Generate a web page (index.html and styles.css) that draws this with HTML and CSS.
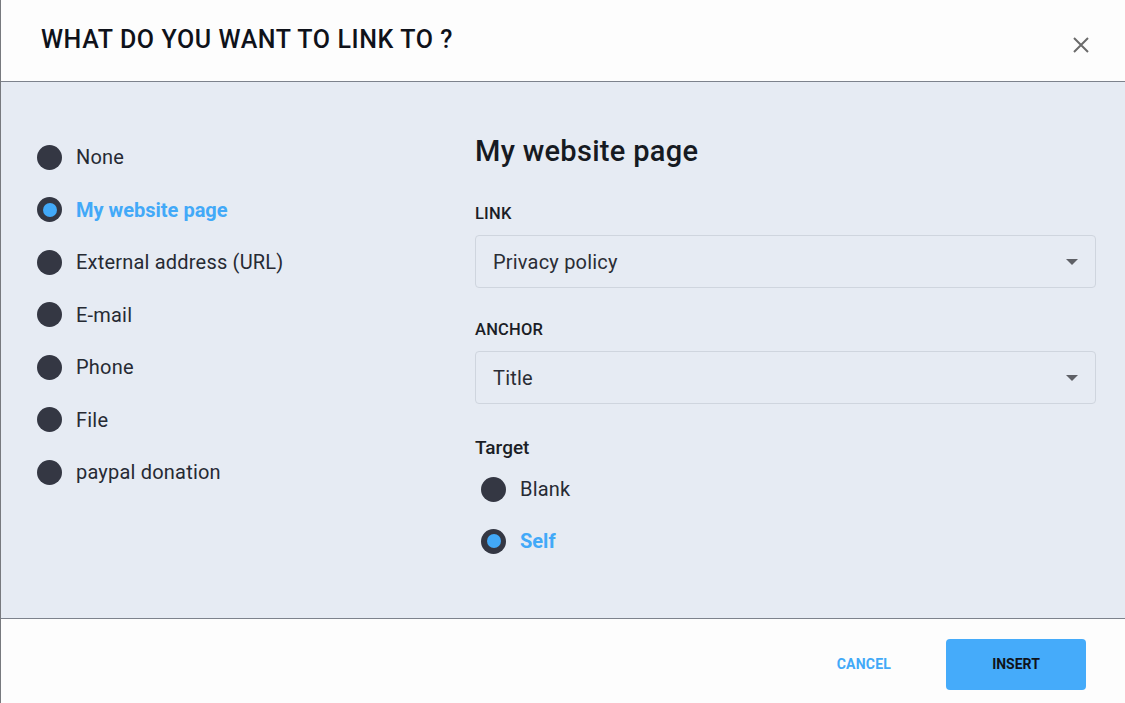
FILE: index.html
```html
<!DOCTYPE html>
<html lang="en">
<head>
<meta charset="utf-8">
<title>Link dialog</title>
<link rel="stylesheet" href="styles.css">
</head>
<body>
<div class="dialog">
  <header class="dlg-head">
    <h1 class="dlg-title">WHAT DO YOU WANT TO LINK TO ?</h1>
    <button class="close" aria-label="Close">
      <svg width="18" height="18" viewBox="0 0 18 18"><path d="M2 2L16 16M16 2L2 16" stroke="#6b6b6b" stroke-width="2" fill="none"/></svg>
    </button>
  </header>
  <main class="dlg-body">
    <ul class="types">
      <li class="radio"><span class="dot"></span><span class="lbl">None</span></li>
      <li class="radio on"><span class="dot"></span><span class="lbl">My website page</span></li>
      <li class="radio"><span class="dot"></span><span class="lbl">External address (URL)</span></li>
      <li class="radio"><span class="dot"></span><span class="lbl">E-mail</span></li>
      <li class="radio"><span class="dot"></span><span class="lbl">Phone</span></li>
      <li class="radio"><span class="dot"></span><span class="lbl">File</span></li>
      <li class="radio"><span class="dot"></span><span class="lbl">paypal donation</span></li>
    </ul>
    <section class="detail">
      <h2 class="detail-title">My website page</h2>
      <div class="field">
        <div class="flabel">LINK</div>
        <div class="select"><span>Privacy policy</span><span class="caret"></span></div>
      </div>
      <div class="field">
        <div class="flabel">ANCHOR</div>
        <div class="select"><span>Title</span><span class="caret"></span></div>
      </div>
      <div class="target-label">Target</div>
      <ul class="targets">
        <li class="radio"><span class="dot"></span><span class="lbl">Blank</span></li>
        <li class="radio on"><span class="dot"></span><span class="lbl">Self</span></li>
      </ul>
    </section>
  </main>
  <footer class="dlg-foot">
    <button class="btn-cancel">CANCEL</button>
    <button class="btn-insert">INSERT</button>
  </footer>
</div>
</body>
</html>
```
FILE: styles.css
```css
* { box-sizing: border-box; }
html, body { margin: 0; padding: 0; }
body {
  font-family: Roboto, "Liberation Sans", sans-serif;
  background: #fdfdfd;
  color: #1b1e26;
  width: 1125px;
  height: 703px;
  overflow: hidden;
}
.dialog {
  height: 703px;
  display: flex;
  flex-direction: column;
  border-left: 1px solid #77797e;
  background: #fdfdfd;
}
.dlg-head {
  height: 82px;
  flex: none;
  display: flex;
  align-items: flex-start;
  justify-content: space-between;
  border-bottom: 1px solid #7d828c;
  padding: 0 35px 0 40px;
}
.dlg-title {
  margin: 24px 0 0;
  font-size: 25px;
  line-height: 32px;
  font-weight: 500;
  letter-spacing: 0.6px;
  color: #0f121a;
}
.close {
  margin-top: 36px;
  background: none;
  border: 0;
  padding: 0;
  width: 18px;
  height: 18px;
  display: flex;
}
.dlg-body {
  flex: 1;
  background: #e6ebf3;
  display: flex;
  padding: 0 29px 0 36px;
}
.types {
  list-style: none;
  margin: 0;
  padding: 49px 0 0;
  width: 438px;
}
.radio {
  display: flex;
  align-items: center;
  height: 52.5px;
  font-size: 20px;
  letter-spacing: 0.2px;
  color: #262a33;
}
.dot {
  width: 25px;
  height: 25px;
  border-radius: 50%;
  background: #343743;
  flex: none;
  margin-right: 14px;
  display: flex;
  align-items: center;
  justify-content: center;
}
.radio.on .dot::after {
  content: "";
  width: 14px;
  height: 14px;
  border-radius: 50%;
  background: #42a9f8;
}
.radio.on .lbl {
  color: #42a9f8;
  font-weight: 700;
  letter-spacing: 0;
}
.detail {
  flex: 1;
  padding-top: 52px;
}
.detail-title {
  margin: 0;
  font-size: 29px;
  font-weight: 500;
  letter-spacing: 0.3px;
  color: #161a22;
  height: 35px;
  line-height: 35px;
}
.field { margin-top: 35px; }
.field + .field { margin-top: 32px; }
.flabel {
  font-size: 16.5px;
  font-weight: 500;
  letter-spacing: 0.2px;
  color: #1b1e26;
  height: 20px;
  line-height: 20px;
  margin-bottom: 11px;
}
.select {
  height: 53px;
  border: 1px solid #cfd5de;
  border-radius: 4px;
  display: flex;
  align-items: center;
  justify-content: space-between;
  padding: 0 17px 0 17px;
  font-size: 20px;
  letter-spacing: 0.2px;
  color: #2a2d35;
}
.caret {
  width: 0;
  height: 0;
  border-left: 6px solid transparent;
  border-right: 6px solid transparent;
  border-top: 6px solid #5e6066;
}
.target-label {
  margin-top: 32px;
  font-size: 19px;
  font-weight: 500;
  color: #1b1e26;
  height: 24px;
  line-height: 24px;
}
.targets {
  list-style: none;
  margin: 3px 0 0;
  padding: 0 0 0 6px;
}
.targets .radio { height: 52px; }
.dlg-foot {
  height: 85px;
  flex: none;
  border-top: 1px solid #7d828c;
  display: flex;
  align-items: center;
  justify-content: flex-end;
  padding: 6px 39px 0 0;
}
.dlg-foot button {
  font-family: Roboto, "Liberation Sans", sans-serif;
  font-size: 14px;
  font-weight: 700;
  border: 0;
  cursor: pointer;
}
.btn-cancel {
  background: none;
  color: #42a9f8;
  margin-right: 55px;
  padding: 0;
  letter-spacing: 0.2px;
}
.btn-insert {
  width: 140px;
  height: 51px;
  background: #45abfa;
  color: #10131a;
  border-radius: 4px;
}
```
